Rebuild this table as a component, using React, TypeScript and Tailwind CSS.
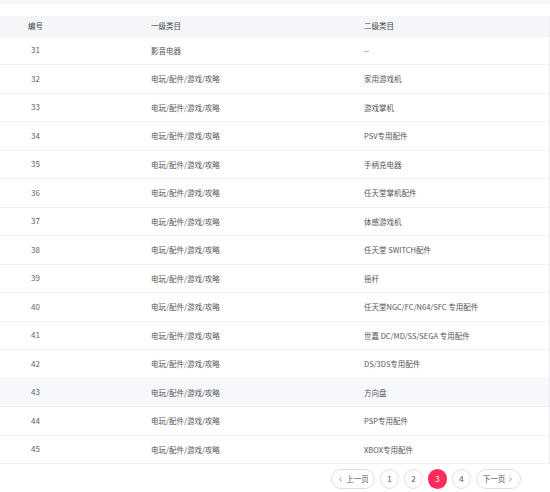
import { ChevronLeft, ChevronRight } from "lucide-react";

const rows = [
  { id: 31, first: "影音电器", second: "--" },
  { id: 32, first: "电玩/配件/游戏/攻略", second: "家用游戏机" },
  { id: 33, first: "电玩/配件/游戏/攻略", second: "游戏掌机" },
  { id: 34, first: "电玩/配件/游戏/攻略", second: "PSV专用配件" },
  { id: 35, first: "电玩/配件/游戏/攻略", second: "手柄充电器" },
  { id: 36, first: "电玩/配件/游戏/攻略", second: "任天堂掌机配件" },
  { id: 37, first: "电玩/配件/游戏/攻略", second: "体感游戏机" },
  { id: 38, first: "电玩/配件/游戏/攻略", second: "任天堂 SWITCH配件" },
  { id: 39, first: "电玩/配件/游戏/攻略", second: "摇杆" },
  { id: 40, first: "电玩/配件/游戏/攻略", second: "任天堂NGC/FC/N64/SFC 专用配件" },
  { id: 41, first: "电玩/配件/游戏/攻略", second: "世嘉 DC/MD/SS/SEGA 专用配件" },
  { id: 42, first: "电玩/配件/游戏/攻略", second: "DS/3DS专用配件" },
  { id: 43, first: "电玩/配件/游戏/攻略", second: "方向盘" },
  { id: 44, first: "电玩/配件/游戏/攻略", second: "PSP专用配件" },
  { id: 45, first: "电玩/配件/游戏/攻略", second: "XBOX专用配件" },
];

const pages = [1, 2, 3, 4];

export default function App() {
  return (
    <div
      className="w-[550px] h-[492px] bg-white overflow-hidden text-[#555]"
      style={{ fontFamily: '"Noto Sans CJK SC", "Noto Sans", sans-serif' }}
    >
      <div className="h-[4px] bg-[#f6f7fa]" />
      <div className="mt-[11.5px] border-r border-[#eceef2]">
        {/* header */}
        <div className="flex items-center h-[21px] bg-[#f5f6f9] text-[7.5px] text-[#444]">
          <div className="w-[71px] text-center">编号</div>
          <div className="w-[293px] pl-[80px]">一级类目</div>
          <div className="flex-1">二级类目</div>
        </div>

        {rows.map((row) => (
          <div
            key={row.id}
            className={`flex items-center h-[28.5px] border-b border-[#f0f1f4] text-[7.5px] ${
              row.id === 43 ? "bg-[#f7f8fc]" : ""
            }`}
          >
            <div className="w-[71px] text-center text-[8px] text-[#5f5f5f]">{row.id}</div>
            <div className="w-[293px] pl-[80px]">{row.first}</div>
            <div className="flex-1">{row.second}</div>
          </div>
        ))}
      </div>

      {/* pagination */}
      <div className="flex justify-end items-center gap-[5px] pr-[29px] pt-[5px] text-[7.5px] text-[#555]">
        <button className="flex items-center justify-center gap-[2px] w-[44px] h-[20px] rounded-full border border-[#dcdfe6] bg-white">
          <ChevronLeft size={7} strokeWidth={2} />
          上一页
        </button>
        {pages.map((p) => (
          <button
            key={p}
            className={`flex items-center justify-center w-[19px] h-[20px] rounded-full text-[8px] ${
              p === 3 ? "bg-[#fd2c5a] text-white" : "border border-[#dcdfe6] bg-white"
            }`}
          >
            {p}
          </button>
        ))}
        <button className="flex items-center justify-center gap-[2px] w-[45px] h-[20px] rounded-full border border-[#dcdfe6] bg-white">
          下一页
          <ChevronRight size={7} strokeWidth={2} />
        </button>
      </div>
    </div>
  );
}
